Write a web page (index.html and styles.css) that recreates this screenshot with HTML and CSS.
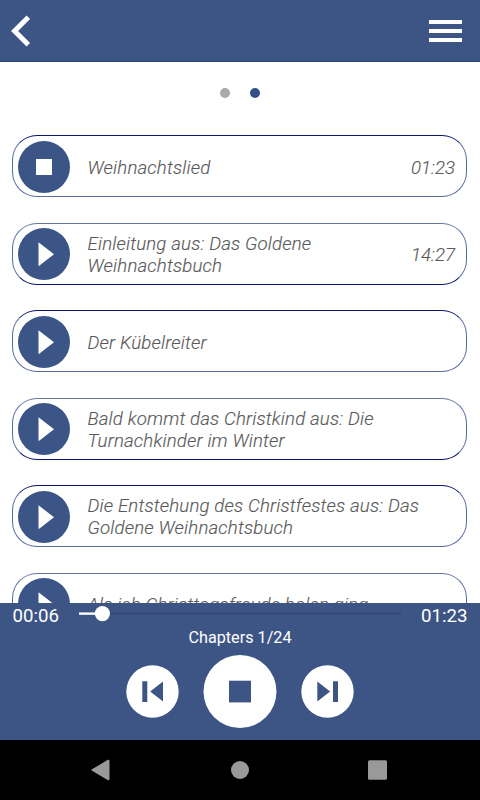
FILE: index.html
```html
<!DOCTYPE html>
<html lang="de">
<head>
<meta charset="utf-8">
<title>Kapitel</title>
<link rel="stylesheet" href="styles.css">
</head>
<body>
<div class="app">
  <header class="topbar">
    <svg class="back" width="20" height="32" viewBox="0 0 20 32"><path d="M17.3 2.3 3.6 16l13.7 13.7" fill="none" stroke="#fff" stroke-width="5"/></svg>
    <div class="menu"><i></i><i></i><i></i></div>
  </header>
  <main class="content">
    <div class="dots"><i></i><i class="active"></i></div>
    <div class="list">
      <div class="item"><span class="disc"><svg width="52" height="52"><path d="M18 18h16v16H18z" fill="#fff"/></svg></span><p>Weihnachtslied</p><time>01:23</time></div>
      <div class="item"><span class="disc"><svg width="52" height="52"><path d="M20.5 14.3v24L36 26.3z" fill="#fff"/></svg></span><p>Einleitung aus: Das Goldene<br>Weihnachtsbuch</p><time>14:27</time></div>
      <div class="item"><span class="disc"><svg width="52" height="52"><path d="M20.5 14.3v24L36 26.3z" fill="#fff"/></svg></span><p>Der Kübelreiter</p></div>
      <div class="item"><span class="disc"><svg width="52" height="52"><path d="M20.5 14.3v24L36 26.3z" fill="#fff"/></svg></span><p>Bald kommt das Christkind aus: Die<br>Turnachkinder im Winter</p></div>
      <div class="item"><span class="disc"><svg width="52" height="52"><path d="M20.5 14.3v24L36 26.3z" fill="#fff"/></svg></span><p class="two-line">Die Entstehung des Christfestes aus: Das<br>Goldene Weihnachtsbuch</p></div>
      <div class="item"><span class="disc"><svg width="52" height="52"><path d="M20.5 14.3v24L36 26.3z" fill="#fff"/></svg></span><p>Als ich Christtagsfreude holen ging</p></div>
    </div>
  </main>
  <footer class="player">
    <div class="progress">
      <span class="clock">00:06</span>
      <svg class="track" width="324" height="20"><path d="M2 10.6h321" stroke="#344973" stroke-width="2.2"/><path d="M1 10.6h24" stroke="#fff" stroke-width="2.4"/><circle cx="24.4" cy="10.6" r="7.6" fill="#fff"/></svg>
      <span class="clock">01:23</span>
    </div>
    <div class="chapters">Chapters 1/24</div>
    <div class="controls">
      <svg width="53" height="53"><circle cx="26.5" cy="26.5" r="26.2" fill="#fff"/><path d="M16.3 16.3h5v20.8h-5zM37 16.6v20L24.2 26.6z" fill="#3d5585"/></svg>
      <svg width="74" height="74"><circle cx="37" cy="36.5" r="36.5" fill="#fff"/><path d="M26 25.7h22v21.7H26z" fill="#3d5585"/></svg>
      <svg width="53" height="53"><circle cx="26.5" cy="26.5" r="26.2" fill="#fff"/><path d="M32 16.3h5v20.8h-5zM16.3 16.6v20l12.8-10z" fill="#3d5585"/></svg>
    </div>
  </footer>
  <nav class="system">
    <svg width="480" height="60"><g fill="#999"><path d="M108.5 20.7v18.6L92.5 30z" stroke="#999" stroke-width="2" stroke-linejoin="round"/><circle cx="240" cy="30" r="9"/><rect x="368" y="20.3" width="19" height="19.5" rx="1.5"/></g></svg>
  </nav>
</div>
</body>
</html>
```

FILE: styles.css
```css
* { box-sizing: border-box; }
body { margin: 0; font-family: Roboto, "Liberation Sans", sans-serif; }
svg { display: block; flex: none; }
.app { width: 480px; height: 800px; display: flex; flex-direction: column; overflow: hidden; background: #fff; }
.topbar { height: 62px; flex: none; display: flex; align-items: center; justify-content: space-between; padding: 1px 18px 0 11px; background: #3d5585; border-bottom: 1px solid #284580; }
.menu { display: flex; flex-direction: column; gap: 5px; width: 33px; }
.menu i { height: 4px; background: #fff; }
.content { height: 541px; flex: none; overflow: hidden; }
.dots { display: flex; justify-content: center; gap: 20px; padding-top: 25.5px; height: 73px; }
.dots i { width: 10px; height: 10px; border-radius: 50%; background: #a9a9a9; }
.dots .active { background: #345187; }
.list { padding: 0 13px 0 12px; }
.item { display: flex; align-items: center; height: 62px; margin: 0 0 26px; padding: 0 11px 0 5px; border: 1px solid #586ca0; border-top-color: #0b1565; border-radius: 25px; color: #575757; font-size: 18.67px; font-style: italic; font-weight: 300; line-height: 22px; white-space: nowrap; -webkit-text-stroke: 0.15px #666; }
.item:nth-child(even) { margin-bottom: 25px; border-top-color: #6577a5; border-bottom-color: #0b1565; }
.disc { width: 52px; height: 52px; flex: none; border-radius: 50%; background: #3b5587; }
.item p { flex: 1; margin: 2px 0 0 17.5px; letter-spacing: 0.15px; }
.item:nth-child(odd) .disc { margin-top: 1px; }
.item:nth-child(odd) p, .item:nth-child(odd) time { margin-top: 3px; }
.item:nth-child(odd) .two-line { margin-top: 1px; }
.item time { margin-top: 2px; }
.player { height: 137px; flex: none; background: #3d5585; color: #fff; }
.progress { display: flex; justify-content: space-between; padding: 0 12.5px; height: 24px; }
.clock { font-size: 18.67px; line-height: 27px; }
.chapters { text-align: center; font-size: 16.2px; line-height: 21px; }
.controls { display: flex; align-items: center; justify-content: center; gap: 24px; margin-top: 6.5px; height: 74px; }
.system { height: 60px; background: #000; }
```
